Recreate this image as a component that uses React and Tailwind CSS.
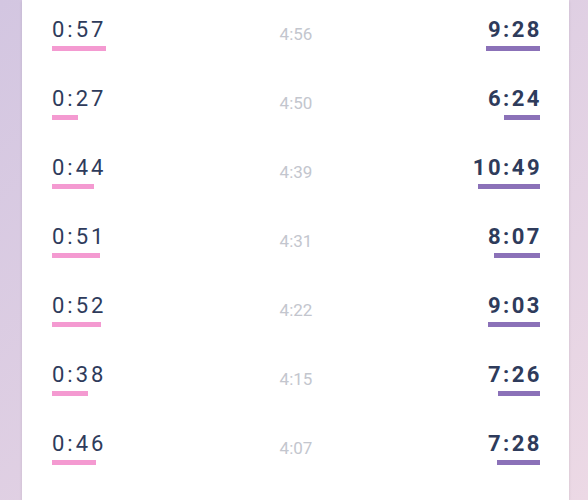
import React from "react";

// split, interval, total
const rows = [
  { split: "0:57", interval: "4:56", total: "9:28" },
  { split: "0:27", interval: "4:50", total: "6:24" },
  { split: "0:44", interval: "4:39", total: "10:49" },
  { split: "0:51", interval: "4:31", total: "8:07" },
  { split: "0:52", interval: "4:22", total: "9:03" },
  { split: "0:38", interval: "4:15", total: "7:26" },
  { split: "0:46", interval: "4:07", total: "7:28" },
];

const toSeconds = (t) => {
  const [m, s] = t.split(":").map(Number);
  return m * 60 + s;
};

function Row({ split, interval, total }) {
  const leftW = (toSeconds(split) / 60) * 57;
  const rightW = (toSeconds(total) / 600) * 57;

  return (
    <div className="grid grid-cols-3 items-center pt-[17px] pb-[18px]">
      <div className="flex flex-col items-start">
        <span className="text-[22px] leading-[26px] tracking-[3px] text-[#2e3b5b]">{split}</span>
        <div className="mt-[3px] h-[5px] bg-[#f49ad1]" style={{ width: leftW }} />
      </div>
      <div className="text-center text-[17px] leading-[17px] text-[#c3c6ce] mt-[1px]">{interval}</div>
      <div className="flex flex-col items-end">
        <span className="text-[22px] leading-[26px] tracking-[2.5px] font-bold text-[#2e3b5b] -mr-[2px]">{total}</span>
        <div className="mt-[3px] h-[5px] bg-[#8b71b8]" style={{ width: rightW }} />
      </div>
    </div>
  );
}

export default function App() {
  return (
    <div
      className="h-[500px] w-[588px] overflow-hidden bg-linear-to-br from-[#d3c6e1] to-[#ecd9e5] flex"
      style={{ fontFamily: "Roboto, 'Noto Sans', sans-serif" }}
    >
      <div className="ml-[22px] w-[547px] h-full bg-white shadow-sm pl-[30px] pr-[29px]">
        {rows.map((r) => (
          <Row key={r.split + r.total} {...r} />
        ))}
      </div>
    </div>
  );
}
